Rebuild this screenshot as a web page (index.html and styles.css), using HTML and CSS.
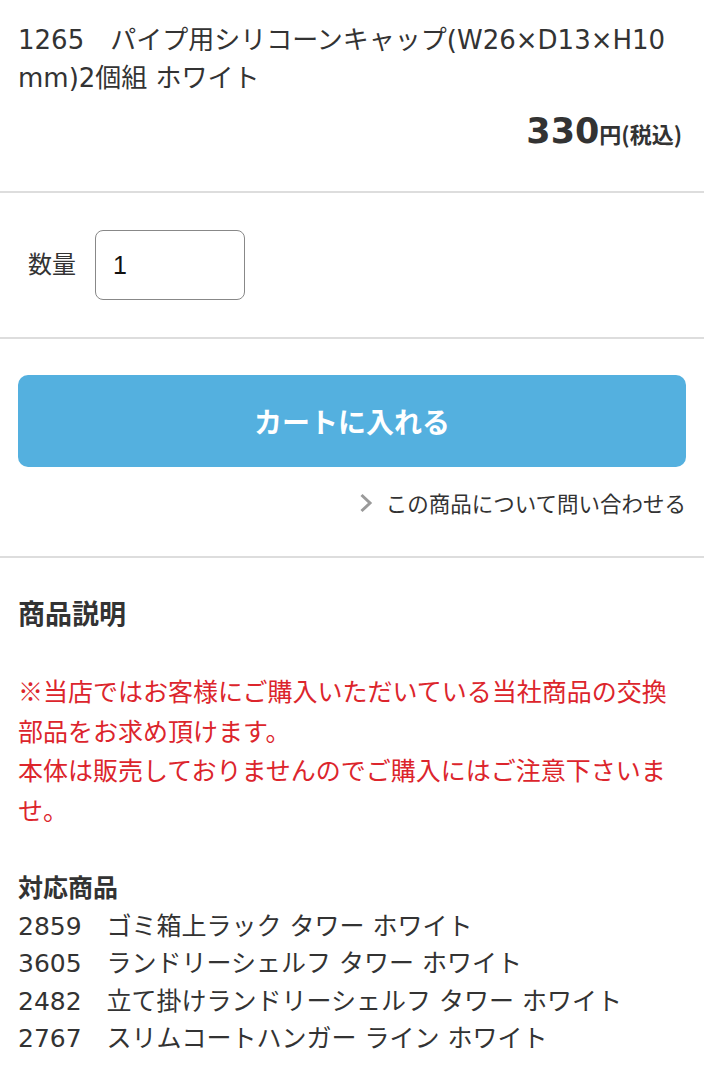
FILE: index.html
```html
<!DOCTYPE html>
<html lang="ja">
<head>
    <meta charset="UTF-8">
    <meta name="viewport" content="width=device-width, initial-scale=1.0">
    <title>パイプ用シリコーンキャップ</title>
    <link rel="stylesheet" href="styles.css">
</head>
<body>
    <div class="product-head">
        <h1 class="product-name">1265　パイプ用シリコーンキャップ(W26×D13×H10mm)2個組 ホワイト</h1>
        <div class="product-price"><span class="price-num">330</span><span class="price-unit">円(税込)</span></div>
    </div>

    <div class="quantity-row">
        <label class="quantity-label" for="qty">数量</label>
        <input class="quantity-input" id="qty" type="text" value="1">
    </div>

    <div class="cart-area">
        <button class="cart-button" type="button">カートに入れる</button>
        <a class="inquiry-link" href="#">
            <svg class="chevron" width="14" height="22" viewBox="0 0 14 22">
                <path d="M2.5 3 L11 11 L2.5 19" fill="none" stroke="#9a9a9a" stroke-width="3"/>
            </svg>
            この商品について問い合わせる
        </a>
    </div>

    <div class="description">
        <h2 class="description-title">商品説明</h2>
        <p class="description-text">
            <span class="notice">※当店ではお客様にご購入いただいている当社商品の交換部品をお求め頂けます。<br>本体は販売しておりませんのでご購入にはご注意下さいませ。</span><br>
            <br>
            <strong>対応商品</strong><br>
            2859　ゴミ箱上ラック タワー ホワイト<br>
            3605　ランドリーシェルフ タワー ホワイト<br>
            2482　立て掛けランドリーシェルフ タワー ホワイト<br>
            2767　スリムコートハンガー ライン ホワイト
        </p>
    </div>
</body>
</html>
```

FILE: styles.css
```css
body {
    margin: 0;
    background: #fff;
    color: #333;
    font-family: "DejaVu Sans", "Noto Sans CJK JP", sans-serif;
    word-break: break-all;
}

.product-head {
    padding: 21px 18px 33px;
    border-bottom: 2px solid #ddd;
}

.product-name {
    margin: 0;
    font-size: 26px;
    font-weight: normal;
    line-height: 38px;
}

.product-price {
    margin-top: 14px;
    text-align: right;
    font-weight: bold;
    line-height: 40px;
    padding-right: 4px;
}

.price-num {
    font-size: 35px;
}

.price-unit {
    font-family: "Noto Sans CJK JP", sans-serif;
    font-size: 22px;
}

.quantity-row {
    display: flex;
    align-items: center;
    gap: 19px;
    padding: 37px 28px 37px;
    border-bottom: 2px solid #ddd;
}

.quantity-label {
    font-family: "Noto Sans CJK JP", sans-serif;
    font-size: 24px;
    margin-top: -6px;
}

.quantity-input {
    box-sizing: border-box;
    width: 150px;
    height: 70px;
    padding: 0 17px;
    border: 1.5px solid #888;
    border-radius: 8px;
    font-family: "Liberation Sans", sans-serif;
    font-size: 25px;
    color: #111;
}

.cart-area {
    display: flex;
    flex-direction: column;
    align-items: flex-end;
    padding: 36px 18px 38px;
    border-bottom: 2px solid #ddd;
}

.cart-button {
    width: 100%;
    height: 92px;
    border: none;
    border-radius: 10px;
    background: #54b0df;
    color: #fff;
    font-family: "Noto Sans CJK JP", sans-serif;
    font-size: 28px;
    font-weight: bold;
}

.inquiry-link {
    display: flex;
    align-items: center;
    gap: 13px;
    margin-top: 21px;
    color: #333;
    font-family: "Noto Sans CJK JP", sans-serif;
    font-size: 21.5px;
    line-height: 30px;
    text-decoration: none;
}

.description {
    padding: 36px 18px;
}

.description-title {
    margin: 0;
    font-family: "Noto Sans CJK JP", sans-serif;
    font-size: 27px;
    line-height: 37px;
}

.description-text {
    margin: 41px 0 0;
    font-size: 25px;
    line-height: 37.6px;
}

.notice {
    color: #dc252c;
    font-family: "Noto Sans CJK JP", sans-serif;
}

.description-text strong {
    font-family: "Noto Sans CJK JP", sans-serif;
}
```
